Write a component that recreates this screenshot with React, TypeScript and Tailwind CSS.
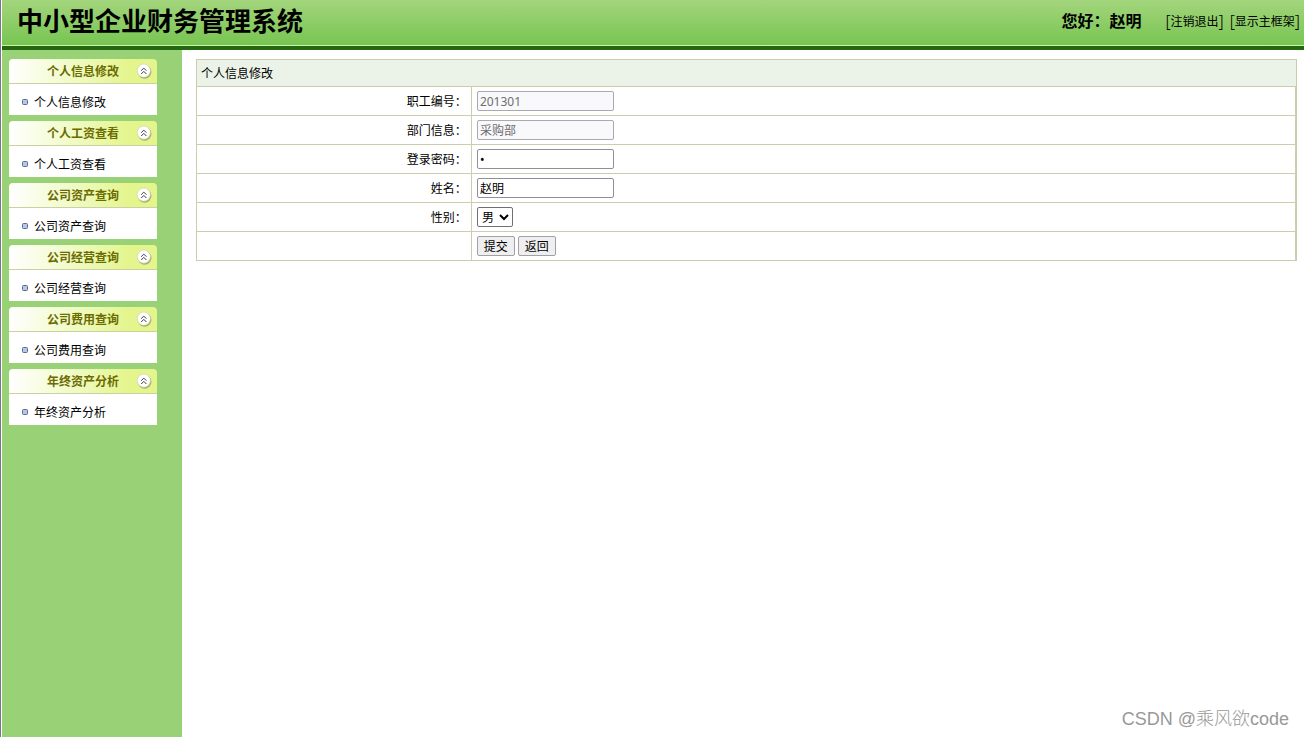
import type { ReactNode } from 'react';

const menus = [
  '个人信息修改',
  '个人工资查看',
  '公司资产查询',
  '公司经营查询',
  '公司费用查询',
  '年终资产分析',
];

const inputClass =
  'block h-5 w-[137px] rounded-xs border border-[#8f8f9d] bg-white px-[2px] text-xs leading-4 text-black outline-none disabled:border-[#a9a9b2] disabled:bg-[#f9f9fb] disabled:text-[#6d6d6d]';

const buttonClass =
  'h-5 w-[38px] rounded-xs border border-[#a0a0a8] bg-[#efefef] pt-0.5 text-xs leading-4 hover:bg-[#e3e3e3]';

const CollapseIcon = () => (
  <svg width="16" height="16" viewBox="0 0 16 16" aria-hidden="true">
    <circle cx="8.6" cy="8.8" r="6.9" fill="#8f9c62" opacity="0.75" />
    <circle cx="7.8" cy="7.6" r="6.6" fill="#fff" stroke="#c9cfae" strokeWidth="0.6" />
    <path d="M5.2 7.7 7.8 5.1 10.4 7.7M5.2 11 7.8 8.4 10.4 11" fill="none" stroke="#3c3c44" strokeWidth="1" />
  </svg>
);

const BulletIcon = () => (
  <svg width="6" height="6" viewBox="0 0 6 6" aria-hidden="true">
    <rect x="0.5" y="0.5" width="5" height="5" rx="1" fill="#b4c9ea" stroke="#5a6a8c" />
  </svg>
);

const Header = () => (
  <header className="flex h-[50px] items-center justify-between border-b-4 border-[#256710] bg-linear-to-b from-[#a3d57c] to-[#76c450] pl-[15px] pr-1 shadow-[inset_0_-1px_0_#c9f3a8]">
    <h1 className="pb-1 text-[26px] leading-8 font-bold">中小型企业财务管理系统</h1>
    <div className="flex items-center pb-1">
      <span className="mr-6 text-base font-bold">您好：赵明</span>
      <div className="flex gap-1.5 text-xs">
        <span className="flex items-center">
          <span className="text-base leading-5 font-light">[</span>
          <a href="#logout" className="pt-0.5">注销退出</a>
          <span className="text-base leading-5 font-light">]</span>
        </span>
        <span className="flex items-center">
          <span className="text-base leading-5 font-light">[</span>
          <a href="#main" className="pt-0.5">显示主框架</a>
          <span className="text-base leading-5 font-light">]</span>
        </span>
      </div>
    </div>
  </header>
);

const Sidebar = () => (
  <nav className="flex w-[180px] shrink-0 flex-col gap-1.5 bg-[#99d177] pt-[9px] pr-[25px] pl-[7px]">
    {menus.map((title) => (
      <section key={title}>
        <button
          type="button"
          className="flex h-[25px] w-full items-center justify-between rounded-t border-b border-[#ccd0a0] bg-linear-to-r from-white to-[#e4f58e] to-80% pr-[5px] pl-[38px] text-xs font-bold text-[#6b6b00]"
        >
          <span className="pt-0.5">{title}</span>
          <CollapseIcon />
        </button>
        <a href="#menu" className="flex h-[31px] items-center gap-1.5 bg-white pt-1 pl-[13px] text-xs">
          <BulletIcon />
          <span className="pt-0.5">{title}</span>
        </a>
      </section>
    ))}
  </nav>
);

const Row = ({ label, id, children }: { label?: string; id?: string; children: ReactNode }) => (
  <tr className="h-[29px]">
    <td className="w-1/4 border border-[#cdcdae] p-0 pt-0.5 pr-1 text-right">
      {label && <label htmlFor={id}>{label}：</label>}
    </td>
    <td className="border border-r-2 border-[#cdcdae] p-0 pl-[5px]">{children}</td>
  </tr>
);

const App = () => {
  return (
    <div
      lang="zh-CN"
      className="relative flex min-h-screen flex-col border-l border-[#77777f] bg-white pl-px font-['Noto_Sans','Noto_Sans_CJK_SC',sans-serif] text-xs text-black"
    >
      <Header />
      <div className="flex grow">
        <Sidebar />
        <main className="grow pt-[9px] pr-[7px] pl-[14px]">
          <form onSubmit={(e) => e.preventDefault()}>
            <table className="w-full border-collapse">
              <thead>
                <tr className="h-[27px]">
                  <th colSpan={2} className="border border-[#cdcdae] bg-[#ebf3e9] p-0 pt-0.5 pl-1 text-left font-normal">
                    个人信息修改
                  </th>
                </tr>
              </thead>
              <tbody>
                <Row label="职工编号" id="number">
                  <input id="number" type="text" defaultValue="201301" disabled className={inputClass} />
                </Row>
                <Row label="部门信息" id="department">
                  <input id="department" type="text" defaultValue="采购部" disabled className={inputClass} />
                </Row>
                <Row label="登录密码" id="password">
                  <input id="password" type="password" defaultValue="1" className={inputClass} />
                </Row>
                <Row label="姓名" id="name">
                  <input id="name" type="text" defaultValue="赵明" className={inputClass} />
                </Row>
                <Row label="性别" id="gender">
                  <select
                    id="gender"
                    className="block h-5 w-9 rounded-xs border border-[#6f6f77] bg-white text-xs leading-4"
                  >
                    <option>男</option>
                    <option>女</option>
                  </select>
                </Row>
                <Row>
                  <div className="flex gap-[3px]">
                    <button type="submit" className={buttonClass}>提交</button>
                    <button type="button" className={buttonClass}>返回</button>
                  </div>
                </Row>
              </tbody>
            </table>
          </form>
        </main>
      </div>
      <span className="absolute right-[15px] bottom-1.5 font-['Liberation_Sans','Noto_Sans_CJK_SC',sans-serif] text-lg leading-6 font-light text-[#999]">
        CSDN @乘风欲code
      </span>
    </div>
  );
};

export default App;
